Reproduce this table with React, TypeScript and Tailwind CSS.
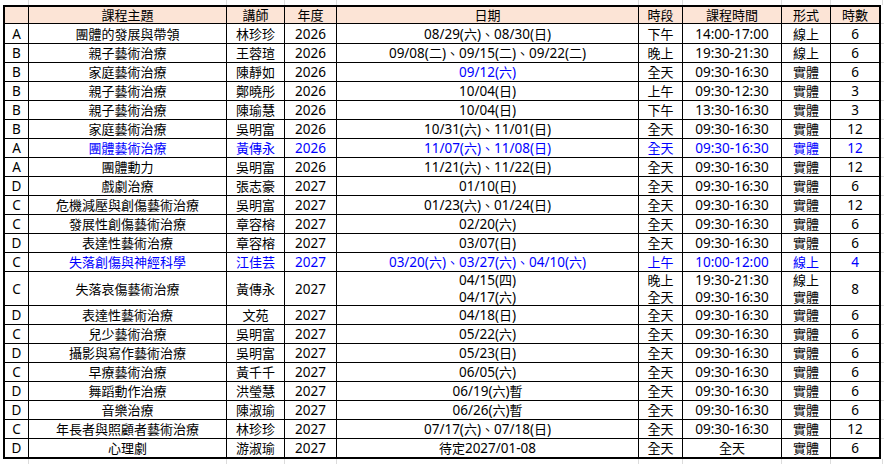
import React from "react";

type Val = string | string[];
type Row = {
  l: string;
  t: string;
  n: string;
  y: string;
  d: Val;
  p: Val;
  tm: Val;
  f: Val;
  h: string;
  blue?: boolean;
  dateBlue?: boolean;
};

const ALL = "09:30-16:30";

const rows: Row[] = [
  { l: "A", t: "團體的發展與帶領", n: "林珍珍", y: "2026", d: "08/29(六)、08/30(日)", p: "下午", tm: "14:00-17:00", f: "線上", h: "6" },
  { l: "B", t: "親子藝術治療", n: "王蓉瑄", y: "2026", d: "09/08(二)、09/15(二)、09/22(二)", p: "晚上", tm: "19:30-21:30", f: "線上", h: "6" },
  { l: "B", t: "家庭藝術治療", n: "陳靜如", y: "2026", d: "09/12(六)", p: "全天", tm: ALL, f: "實體", h: "6", dateBlue: true },
  { l: "B", t: "親子藝術治療", n: "鄭曉彤", y: "2026", d: "10/04(日)", p: "上午", tm: "09:30-12:30", f: "實體", h: "3" },
  { l: "B", t: "親子藝術治療", n: "陳瑜慧", y: "2026", d: "10/04(日)", p: "下午", tm: "13:30-16:30", f: "實體", h: "3" },
  { l: "B", t: "家庭藝術治療", n: "吳明富", y: "2026", d: "10/31(六)、11/01(日)", p: "全天", tm: ALL, f: "實體", h: "12" },
  { l: "A", t: "團體藝術治療", n: "黃傳永", y: "2026", d: "11/07(六)、11/08(日)", p: "全天", tm: ALL, f: "實體", h: "12", blue: true },
  { l: "A", t: "團體動力", n: "吳明富", y: "2026", d: "11/21(六)、11/22(日)", p: "全天", tm: ALL, f: "實體", h: "12" },
  { l: "D", t: "戲劇治療", n: "張志豪", y: "2027", d: "01/10(日)", p: "全天", tm: ALL, f: "實體", h: "6" },
  { l: "C", t: "危機減壓與創傷藝術治療", n: "吳明富", y: "2027", d: "01/23(六)、01/24(日)", p: "全天", tm: ALL, f: "實體", h: "12" },
  { l: "C", t: "發展性創傷藝術治療", n: "章容榕", y: "2027", d: "02/20(六)", p: "全天", tm: ALL, f: "實體", h: "6" },
  { l: "D", t: "表達性藝術治療", n: "章容榕", y: "2027", d: "03/07(日)", p: "全天", tm: ALL, f: "實體", h: "6" },
  { l: "C", t: "失落創傷與神經科學", n: "江佳芸", y: "2027", d: "03/20(六)、03/27(六)、04/10(六)", p: "上午", tm: "10:00-12:00", f: "線上", h: "4", blue: true },
  { l: "C", t: "失落哀傷藝術治療", n: "黃傳永", y: "2027", d: ["04/15(四)", "04/17(六)"], p: ["晚上", "全天"], tm: ["19:30-21:30", ALL], f: ["線上", "實體"], h: "8" },
  { l: "D", t: "表達性藝術治療", n: "文苑", y: "2027", d: "04/18(日)", p: "全天", tm: ALL, f: "實體", h: "6" },
  { l: "C", t: "兒少藝術治療", n: "吳明富", y: "2027", d: "05/22(六)", p: "全天", tm: ALL, f: "實體", h: "6" },
  { l: "D", t: "攝影與寫作藝術治療", n: "吳明富", y: "2027", d: "05/23(日)", p: "全天", tm: ALL, f: "實體", h: "6" },
  { l: "C", t: "早療藝術治療", n: "黃千千", y: "2027", d: "06/05(六)", p: "全天", tm: ALL, f: "實體", h: "6" },
  { l: "D", t: "舞蹈動作治療", n: "洪瑩慧", y: "2027", d: "06/19(六)暫", p: "全天", tm: ALL, f: "實體", h: "6" },
  { l: "D", t: "音樂治療", n: "陳淑瑜", y: "2027", d: "06/26(六)暫", p: "全天", tm: ALL, f: "實體", h: "6" },
  { l: "C", t: "年長者與照顧者藝術治療", n: "林珍珍", y: "2027", d: "07/17(六)、07/18(日)", p: "全天", tm: ALL, f: "實體", h: "12" },
  { l: "D", t: "心理劇", n: "游淑瑜", y: "2027", d: "待定2027/01-08", p: "全天", tm: "全天", f: "實體", h: "6" },
];

const W = [
  "w-[24px]",
  "w-[198px]",
  "w-[58px]",
  "w-[52px]",
  "w-[302px]",
  "w-[44px]",
  "w-[99px]",
  "w-[49px]",
  "w-[48px]",
];

const HEADERS = ["", "課程主題", "講師", "年度", "日期", "時段", "課程時間", "形式", "時數"];

function rowHeight(i: number, r: Row): string {
  if (Array.isArray(r.d)) return "h-[34px] border-b border-black";
  if (i === 0) return "h-[20px] border-b border-black";
  if (i === rows.length - 1) return "h-[18px]";
  return "h-[19px] border-b border-black";
}

function stubHeight(i: number, r: Row): string {
  if (Array.isArray(r.d)) return "h-[34px] border-b border-[#dcdcdc]";
  if (i === 0) return "h-[20px] border-b border-[#dcdcdc]";
  if (i === rows.length - 1) return "h-[18px]";
  return "h-[19px] border-b border-[#dcdcdc]";
}

const CJK = /([\u3000-\u9fff\uff00-\uffef]+)/;

function Text({ s }: { s: string }) {
  const parts = s.split(CJK).filter((p) => p.length > 0);
  return (
    <>
      {parts.map((p, k) =>
        CJK.test(p) ? (
          <span key={k} className="text-[13px]">
            {p}
          </span>
        ) : (
          <span key={k} className="text-[13.5px]">
            {p}
          </span>
        )
      )}
    </>
  );
}

function Cell({ idx, v, color }: { idx: number; v: Val; color: string }) {
  const last = idx === W.length - 1;
  return (
    <div
      className={`${W[idx]} ${last ? "" : "border-r border-black"} ${color} flex shrink-0 flex-col items-center justify-center whitespace-nowrap overflow-hidden`}
    >
      {Array.isArray(v) ? (
        v.map((s, k) => (
          <span key={k} className="leading-[17px]">
            <Text s={s} />
          </span>
        ))
      ) : (
        <span className="leading-[16px]">
          <Text s={v} />
        </span>
      )}
    </div>
  );
}

function GridStrip({ h }: { h: string }) {
  return (
    <div className={`${h} flex shrink-0`}>
      <div className="w-[5px] shrink-0" />
      {W.map((w, i) => (
        <div key={i} className={`${w} shrink-0 ${i < W.length - 1 ? "border-r border-[#dcdcdc]" : ""}`} />
      ))}
      <div className="w-[4px] shrink-0 border-r border-[#dcdcdc]" />
    </div>
  );
}

export default function App() {
  return (
    <div className="w-[884px] h-[464px] bg-white overflow-hidden flex flex-col text-[13px] leading-[16px] text-black font-['Noto_Sans','Noto_Sans_CJK_TC',sans-serif]">
      <GridStrip h="h-[5px]" />
      <div className="flex shrink-0">
        <div className="w-[3px] shrink-0" />
        <div className="w-[878px] shrink-0 border-2 border-black flex flex-col">
          <div className="h-[17px] border-b border-black bg-[#fce4d6] flex">
            {HEADERS.map((hd, i) => (
              <Cell key={i} idx={i} v={hd} color="text-black" />
            ))}
          </div>
          {rows.map((r, i) => {
            const c = r.blue ? "text-[#0000ff]" : "text-black";
            return (
              <div key={i} className={`${rowHeight(i, r)} flex`}>
                <Cell idx={0} v={r.l} color="text-black" />
                <Cell idx={1} v={r.t} color={c} />
                <Cell idx={2} v={r.n} color={c} />
                <Cell idx={3} v={r.y} color={c} />
                <Cell idx={4} v={r.d} color={r.dateBlue ? "text-[#0000ff]" : c} />
                <Cell idx={5} v={r.p} color={c} />
                <Cell idx={6} v={r.tm} color={c} />
                <Cell idx={7} v={r.f} color={c} />
                <Cell idx={8} v={r.h} color={c} />
              </div>
            );
          })}
        </div>
        <div className="w-[3px] shrink-0 flex flex-col pt-[2px]">
          <div className="h-[17px] border-b border-[#dcdcdc]" />
          {rows.map((r, i) => (
            <div key={i} className={stubHeight(i, r)} />
          ))}
        </div>
      </div>
      <GridStrip h="flex-1" />
    </div>
  );
}
